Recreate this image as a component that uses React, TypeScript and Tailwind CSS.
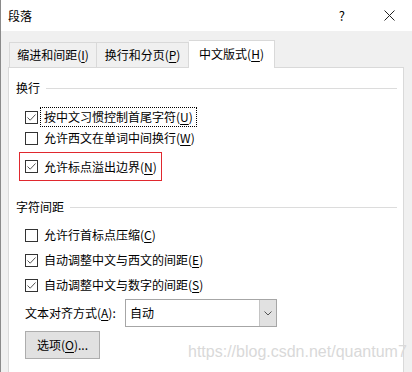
import React from "react";

type Option = {
  label: string;
  key: string;
  checked: boolean;
};

const wrapOptions: Option[] = [
  { label: "按中文习惯控制首尾字符", key: "U", checked: true },
  { label: "允许西文在单词中间换行", key: "W", checked: false },
];

const spacingOptions: Option[] = [
  { label: "允许行首标点压缩", key: "C", checked: false },
  { label: "自动调整中文与西文的间距", key: "E", checked: true },
  { label: "自动调整中文与数字的间距", key: "S", checked: true },
];

function CheckBox({ checked }: { checked: boolean }) {
  return (
    <span className="flex h-[13px] w-[13px] shrink-0 items-center justify-center border border-[#333333] bg-white">
      {checked && (
        <svg width="11" height="11" viewBox="0 0 11 11" fill="none">
          <path d="M1.5 5.5 L4.2 8.2 L9.5 2.5" stroke="#555555" strokeWidth="1" />
        </svg>
      )}
    </span>
  );
}

function Label({ text, hotkey }: { text: string; hotkey: string }) {
  return (
    <span>
      {text}(<span className="underline underline-offset-2">{hotkey}</span>)
    </span>
  );
}

function OptionRow({ option, focused }: { option: Option; focused?: boolean }) {
  return (
    <div className="flex h-[20px] items-center">
      <CheckBox checked={option.checked} />
      <span
        className={`ml-[2px] flex h-[20px] items-center px-[3px] ${
          focused ? "border border-dotted border-black" : "border border-transparent"
        }`}
      >
        <Label text={option.label} hotkey={option.key} />
      </span>
    </div>
  );
}

function GroupTitle({ title }: { title: string }) {
  return (
    <div className="flex h-[20px] items-center">
      <span>{title}</span>
      <span className="ml-[6px] mr-[6px] h-px flex-1 bg-[#dcdcdc]" />
    </div>
  );
}

export default function App() {
  return (
    <div className="relative flex h-[372px] w-[412px] flex-col overflow-hidden border-l border-[#8a8a8a] bg-[#f0f0f0] font-['Noto_Sans_CJK_SC',sans-serif] text-[12px] leading-[20px] text-black">
      {/* 타이틀 바 */}
      <header className="flex h-[31px] shrink-0 items-center bg-white pl-[7px]">
        <span className="flex-1">段落</span>
        <span className="mr-[39px] text-[13px]">?</span>
        <svg className="mr-[17px]" width="11" height="11" viewBox="0 0 11 11">
          <path d="M0.5 0.5 L10.5 10.5 M10.5 0.5 L0.5 10.5" stroke="#222222" strokeWidth="1" />
        </svg>
      </header>

      <div className="flex flex-1 flex-col pl-[7px] pt-[9px]">
        {/* 탭 */}
        <div className="relative z-10 flex h-[27px] items-end">
          <div className="ml-px flex h-[25px] w-[88px] items-center justify-center border border-b-0 border-[#d9d9d9] bg-[#f0f0f0]">
            <Label text="缩进和间距" hotkey="I" />
          </div>
          <div className="flex h-[25px] w-[92px] items-center justify-center border border-b-0 border-l-0 border-[#d9d9d9] bg-[#f0f0f0]">
            <Label text="换行和分页" hotkey="P" />
          </div>
          <div className="-mb-px flex h-[28px] w-[86px] items-center justify-center border border-b-0 border-l-0 border-[#d9d9d9] bg-white pb-px">
            <Label text="中文版式" hotkey="H" />
          </div>
        </div>

        {/* 패널 */}
        <section className="flex w-[396px] flex-1 flex-col border border-b-0 border-[#d9d9d9] bg-white pl-[7px] pt-[10px]">
          <GroupTitle title="换行" />
          <div className="ml-[9px] mt-[9px] flex flex-col gap-px">
            <OptionRow option={wrapOptions[0]} focused />
            <OptionRow option={wrapOptions[1]} />
          </div>
          <div className="ml-[3px] mt-[4px] flex h-[29px] w-[143px] items-center border border-[#e0282e] pl-[5px]">
            <OptionRow option={{ label: "允许标点溢出边界", key: "N", checked: true }} />
          </div>

          <div className="mt-[16px]">
            <GroupTitle title="字符间距" />
          </div>
          <div className="ml-[9px] mt-[8px] flex flex-col gap-[5px]">
            {spacingOptions.map((option) => (
              <OptionRow key={option.key} option={option} />
            ))}
          </div>

          <div className="ml-[9px] mt-[4px] flex h-[28px] items-center">
            <span className="w-[100px]">
              文本对齐方式(<span className="underline underline-offset-2">A</span>):
            </span>
            <div className="flex h-[28px] w-[152px] border border-[#a6a6a6]">
              <span className="flex flex-1 items-center pl-[4px]">自动</span>
              <span className="flex w-[17px] items-center justify-center border-l border-[#c4c4c4] bg-[#e1e1e1]">
                <svg width="8" height="5" viewBox="0 0 8 5" fill="none">
                  <path d="M0.5 0.5 L4 4 L7.5 0.5" stroke="#555555" strokeWidth="1" />
                </svg>
              </span>
            </div>
          </div>

          <button
            type="button"
            className="ml-[9px] mt-[4px] flex h-[28px] w-[75px] items-center justify-center border border-[#adadad] bg-[#e1e1e1]"
          >
            选项(<span className="underline underline-offset-2">O</span>)...
          </button>
        </section>
      </div>

      {/* 워터마크 */}
      <span className="absolute left-[187px] top-[341px] font-['Liberation_Sans',sans-serif] text-[16px] leading-[22px] text-[#d9d9d9]">
        https://blog.csdn.net/quantum7
      </span>
    </div>
  );
}
